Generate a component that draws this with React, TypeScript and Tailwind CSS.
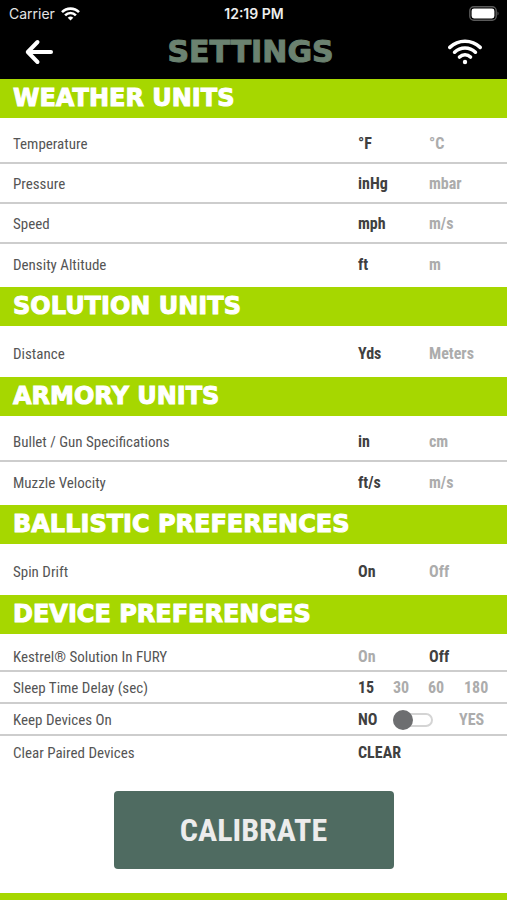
import { ReactNode, useState } from "react";
import clsx from "clsx";

interface SectionProps {
  title: string;
  children: ReactNode;
}

function Section({ title, children }: SectionProps) {
  return (
    <section>
      <h2 className="flex h-[39px] items-center bg-[#a6d700] px-[13px] pb-[2px] font-['DejaVu_Sans',sans-serif] text-2xl leading-none font-bold text-white [-webkit-text-stroke:1px_currentColor]">
        {title}
      </h2>
      <div className="divide-y-2 divide-[#cdcdcd] pt-[6px] pb-[3px]">{children}</div>
    </section>
  );
}

interface RowProps {
  label: string;
  size?: "single" | "normal" | "compact";
  children: ReactNode;
}

function Row({ label, size = "normal", children }: RowProps) {
  return (
    <div
      role="group"
      aria-label={label}
      className={clsx(
        "flex items-center pt-[2px] pl-[13px] text-base leading-5",
        size === "single" && "h-[42px]",
        size === "normal" && "h-10",
        size === "compact" && "h-8 first:pt-1"
      )}
    >
      <span className="flex-1 text-[15px] text-[#555]">{label}</span>
      <div className="w-[149px] font-bold">{children}</div>
    </div>
  );
}

interface OptionProps {
  active: boolean;
  onClick: () => void;
  children: ReactNode;
}

function Option({ active, onClick, children }: OptionProps) {
  return (
    <button
      type="button"
      aria-pressed={active}
      onClick={onClick}
      className={clsx("text-left", active ? "text-[#404040]" : "text-[#acacac]")}
    >
      {children}
    </button>
  );
}

interface ChoiceProps {
  options: string[];
  initial?: number;
}

function Choice({ options, initial = 0 }: ChoiceProps) {
  const [selected, setSelected] = useState(initial);

  return (
    <div
      className={clsx(
        "grid",
        options.length > 2 ? "grid-cols-[35px_35px_36px_1fr]" : "grid-cols-[71px_1fr]"
      )}
    >
      {options.map((option, i) => (
        <Option key={option} active={selected === i} onClick={() => setSelected(i)}>
          {option}
        </Option>
      ))}
    </div>
  );
}

function KeepOn() {
  const [on, setOn] = useState(false);

  return (
    <div className="grid grid-cols-[35px_66px_1fr] items-center">
      <Option active={!on} onClick={() => setOn(false)}>
        NO
      </Option>
      <input
        type="checkbox"
        role="switch"
        aria-label="Keep Devices On"
        checked={on}
        onChange={(e) => setOn(e.target.checked)}
        className="relative h-[14px] w-10 appearance-none rounded-full border-2 border-[#d4d4d4] bg-white before:absolute before:-top-[5px] before:-left-[2px] before:size-5 before:rounded-full before:bg-[#6d6e70] checked:before:left-[18px]"
      />
      <Option active={on} onClick={() => setOn(true)}>
        YES
      </Option>
    </div>
  );
}

function StatusBar() {
  return (
    <div className="grid h-[27px] grid-cols-3 items-center pr-2 pl-[9px] font-['Inter',sans-serif] text-[14px] leading-4">
      <div className="flex items-center gap-[6px] text-[#e4e4e4]">
        <span>Carrier</span>
        <svg width="19" height="14" viewBox="0 0 19 14" fill="none" stroke="#fff" strokeWidth="2.6">
          <path d="M1 5.2a12 12 0 0 1 17 0" />
          <path d="M4.1 8.3a7.6 7.6 0 0 1 10.8 0" />
          <path d="M9.5 13.6 6.7 10.8a4 4 0 0 1 5.6 0Z" fill="#fff" stroke="none" />
        </svg>
      </div>
      <span className="text-center font-semibold text-[#eee]">12:19 PM</span>
      <svg className="justify-self-end" width="30" height="15" viewBox="0 0 30 15" fill="none">
        <rect x="0.8" y="0.8" width="26.4" height="13.4" rx="4" stroke="#5a5a5a" strokeWidth="1.4" />
        <rect x="2.6" y="2.6" width="22.8" height="9.8" rx="2.4" fill="#fff" />
        <path d="M28.5 5.4c1.4.7 1.4 3.5 0 4.2Z" fill="#5a5a5a" />
      </svg>
    </div>
  );
}

function NavBar() {
  return (
    <div className="flex h-[52px] items-center justify-between px-6 pb-[2px]">
      <button type="button" aria-label="Back">
        <svg width="30" height="26" viewBox="0 0 30 26" fill="none" stroke="#fff" strokeWidth="4" strokeLinecap="round" strokeLinejoin="round">
          <path d="M13.5 3 3.8 13l9.7 10" />
          <path d="M4.5 13H27" />
        </svg>
      </button>
      <h1 className="font-['DejaVu_Sans',sans-serif] text-[30px] leading-none font-bold text-[#6b8270] [-webkit-text-stroke:1px_currentColor]">
        SETTINGS
      </h1>
      <button type="button" aria-label="Connection">
        <svg width="36" height="26" viewBox="0 0 36 26" fill="none" stroke="#fff" strokeWidth="3.6" strokeLinecap="round">
          <path d="M2.8 8.4a22 22 0 0 1 30.4 0" />
          <path d="M7.6 13.2a15 15 0 0 1 20.8 0" />
          <path d="M12.5 18a8 8 0 0 1 11 0" />
          <circle cx="18" cy="23" r="2.2" fill="#fff" stroke="none" />
        </svg>
      </button>
    </div>
  );
}

export default function App() {
  return (
    <div className="flex min-h-screen flex-col bg-white font-['Roboto_Condensed','Liberation_Sans_Narrow','Liberation_Sans',sans-serif]">
      <header className="bg-black">
        <StatusBar />
        <NavBar />
      </header>

      <main className="flex-1">
        <Section title="WEATHER UNITS">
          <Row label="Temperature">
            <Choice options={["°F", "°C"]} />
          </Row>
          <Row label="Pressure">
            <Choice options={["inHg", "mbar"]} />
          </Row>
          <Row label="Speed">
            <Choice options={["mph", "m/s"]} />
          </Row>
          <Row label="Density Altitude">
            <Choice options={["ft", "m"]} />
          </Row>
        </Section>

        <Section title="SOLUTION UNITS">
          <Row label="Distance" size="single">
            <Choice options={["Yds", "Meters"]} />
          </Row>
        </Section>

        <Section title="ARMORY UNITS">
          <Row label="Bullet / Gun Specifications">
            <Choice options={["in", "cm"]} />
          </Row>
          <Row label="Muzzle Velocity">
            <Choice options={["ft/s", "m/s"]} />
          </Row>
        </Section>

        <Section title="BALLISTIC PREFERENCES">
          <Row label="Spin Drift" size="single">
            <Choice options={["On", "Off"]} />
          </Row>
        </Section>

        <Section title="DEVICE PREFERENCES">
          <Row label="Kestrel® Solution In FURY" size="compact">
            <Choice options={["On", "Off"]} initial={1} />
          </Row>
          <Row label="Sleep Time Delay (sec)" size="compact">
            <Choice options={["15", "30", "60", "180"]} />
          </Row>
          <Row label="Keep Devices On" size="compact">
            <KeepOn />
          </Row>
          <Row label="Clear Paired Devices" size="compact">
            <button type="button" className="text-[#404040]">
              CLEAR
            </button>
          </Row>
        </Section>

        <div className="flex justify-center pt-5 pb-6">
          <button
            type="button"
            className="h-[78px] w-[280px] rounded bg-[#4f6b61] text-[32px] leading-none font-bold text-[#ececec]"
          >
            CALIBRATE
          </button>
        </div>
      </main>

      <footer className="h-[7px] bg-[#a6d700]" />
    </div>
  );
}
